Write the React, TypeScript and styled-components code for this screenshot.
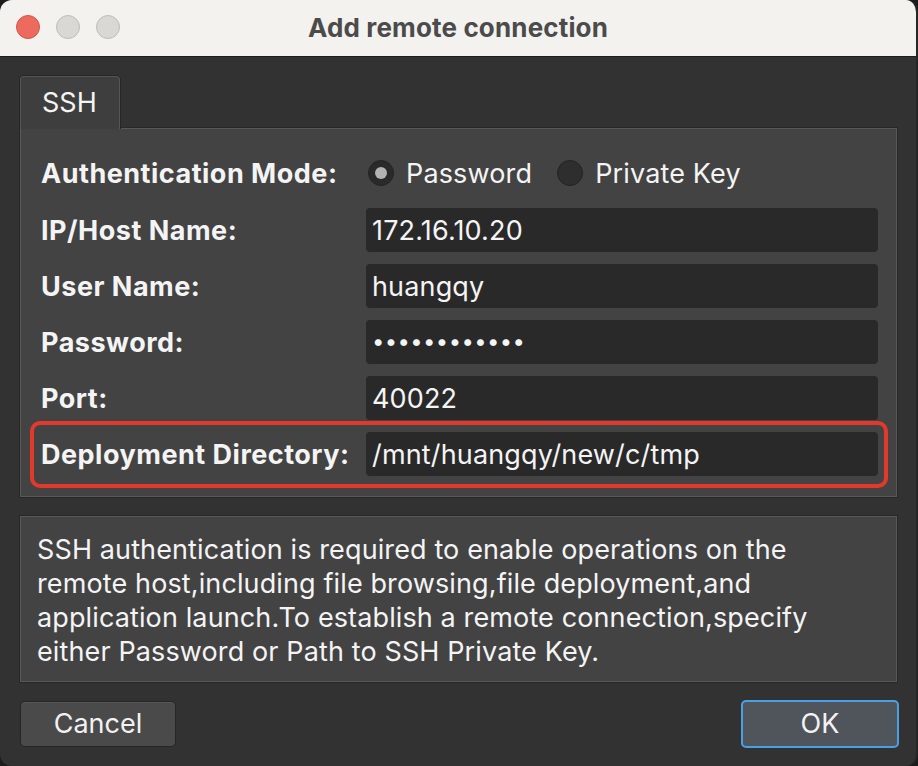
import React from "react";
import styled, { createGlobalStyle } from "styled-components";

const Global = createGlobalStyle`
  html, body { margin: 0; padding: 0; background: #1c1c1c; }
  body { font-family: Inter, "Liberation Sans", sans-serif; -webkit-font-smoothing: antialiased; }
  * { box-sizing: border-box; }
`;

const Window = styled.div`
  width: 918px;
  height: 766px;
  border-radius: 12px;
  overflow: hidden;
  display: flex;
  flex-direction: column;
  background: #323232;
  border-right: 2px solid #262626;
`;

const TitleBar = styled.div`
  height: 57px;
  flex: none;
  background: #f3f2ef;
  border-bottom: 1px solid #1e1e1e;
  display: flex;
  align-items: center;
  position: relative;
  padding-left: 16px;
  gap: 16px;
`;

const Light = styled.span<{ $color: string; $border: string }>`
  width: 24px;
  height: 24px;
  border-radius: 50%;
  background: ${(p) => p.$color};
  border: 1px solid ${(p) => p.$border};
  margin-top: -2px;
`;

const Title = styled.div`
  position: absolute;
  left: 0;
  right: 0;
  top: 0;
  bottom: 0;
  display: flex;
  align-items: center;
  justify-content: center;
  font-weight: 700;
  font-size: 26px;
  letter-spacing: 0.15px;
  color: #4b4b4b;
  padding-bottom: 2px;
  pointer-events: none;
`;

const Body = styled.div`
  flex: 1;
  display: flex;
  flex-direction: column;
  padding: 19px 19px 0 20px;
`;

const TabBar = styled.div`
  display: flex;
  height: 52px;
`;

const Tab = styled.div`
  width: 100px;
  height: 53px;
  background: #3e3e3e;
  border: 1px solid #555;
  border-bottom: none;
  border-radius: 4px 4px 0 0;
  color: #f4f4f4;
  font-size: 27px;
  display: flex;
  align-items: center;
  padding-left: 21px;
  padding-bottom: 2px;
  position: relative;
  z-index: 1;
  box-shadow: 0 -1px 0 #262626, -1px 0 0 #262626, 1px 0 0 #262626;
`;

const Pane = styled.div`
  height: 369px;
  background: #434343;
  border: 1px solid #585858;
  box-shadow: 0 0 0 1px #282828;
  display: flex;
  flex-direction: column;
  gap: 12px;
  padding: 21px 18px 0 20px;
`;

const Row = styled.div<{ $highlight?: boolean; $tall?: boolean }>`
  display: grid;
  grid-template-columns: 325px 1fr;
  align-items: center;
  height: ${(p) => (p.$tall ? 46 : 44)}px;
  position: relative;
  ${(p) =>
    p.$highlight &&
    `
    &::after {
      content: "";
      position: absolute;
      inset: -11px -10px -12px -11px;
      border: 4px solid #e2392d;
      border-radius: 10px;
      pointer-events: none;
    }
  `}
`;

const Label = styled.div`
  font-weight: 700;
  font-size: 27px;
  letter-spacing: 0.5px;
  color: #f4f4f4;
  white-space: nowrap;
  padding-top: 1px;
`;

const Field = styled.div`
  height: 44px;
  background: #292929;
  border-radius: 4px;
  color: #f4f4f4;
  font-size: 27px;
  letter-spacing: 0.15px;
  display: flex;
  align-items: center;
  padding-left: 6px;
  white-space: nowrap;
`;

const Dots = styled.span`
  letter-spacing: 0.4px;
  font-size: 22px;
  padding-bottom: 3px;
`;

const Radios = styled.div`
  display: flex;
  align-items: center;
  padding-left: 2px;
`;

const RadioItem = styled.div<{ $gap: number }>`
  display: flex;
  align-items: center;
  gap: 12px;
  margin-right: ${(p) => p.$gap}px;
  color: #f4f4f4;
  font-size: 27px;
  letter-spacing: 0.15px;
`;

const RadioCircle = styled.span<{ $checked?: boolean }>`
  width: 26px;
  height: 26px;
  border-radius: 50%;
  background: ${(p) => (p.$checked ? "#2a2a2a" : "#2e2e2e")};
  border: 1px solid #232323;
  display: flex;
  align-items: center;
  justify-content: center;
  &::after {
    content: "";
    display: ${(p) => (p.$checked ? "block" : "none")};
    width: 12px;
    height: 12px;
    border-radius: 50%;
    background: #b3b3b3;
  }
`;

const Description = styled.div`
  margin-top: 19px;
  height: 166px;
  background: #434343;
  border: 1px solid #585858;
  box-shadow: 0 0 0 1px #282828;
  padding: 16px 0 0 16px;
  color: #f4f4f4;
  font-size: 27px;
  letter-spacing: 0.12px;
  line-height: 34px;
  white-space: nowrap;
`;

const Buttons = styled.div`
  margin-top: 18px;
  display: flex;
  justify-content: space-between;
  align-items: center;
`;

const Button = styled.button<{ $primary?: boolean }>`
  font-family: inherit;
  font-size: 27px;
  color: #f2f2f2;
  height: ${(p) => (p.$primary ? 48 : 46)}px;
  width: ${(p) => (p.$primary ? 158 : 156)}px;
  border-radius: 5px;
  background: ${(p) => (p.$primary ? "#4f555b" : "#4a4a4a")};
  border: ${(p) => (p.$primary ? "2px solid #4aa0e6" : "1px solid #262626")};
  box-shadow: ${(p) => (p.$primary ? "none" : "inset 0 1px 0 #575757")};
  padding: 0 0 2px;
  margin-right: ${(p) => (p.$primary ? "-2px" : "0")};
`;

export default function App() {
  return (
    <>
      <Global />
      <Window>
        <TitleBar>
          <Light $color="#ec6a5e" $border="#d65448" />
          <Light $color="#d9d8d5" $border="#bfbebb" />
          <Light $color="#d9d8d5" $border="#bfbebb" />
          <Title>Add remote connection</Title>
        </TitleBar>
        <Body>
          <TabBar>
            <Tab>SSH</Tab>
          </TabBar>
          <Pane>
            <Row $tall>
              <Label>Authentication Mode:</Label>
              <Radios>
                <RadioItem $gap={25}>
                  <RadioCircle $checked />
                  Password
                </RadioItem>
                <RadioItem $gap={0}>
                  <RadioCircle />
                  Private Key
                </RadioItem>
              </Radios>
            </Row>
            <Row>
              <Label>IP/Host Name:</Label>
              <Field>172.16.10.20</Field>
            </Row>
            <Row>
              <Label>User Name:</Label>
              <Field>huangqy</Field>
            </Row>
            <Row>
              <Label>Password:</Label>
              <Field>
                <Dots>••••••••••••</Dots>
              </Field>
            </Row>
            <Row>
              <Label>Port:</Label>
              <Field>40022</Field>
            </Row>
            <Row $highlight>
              <Label>Deployment Directory:</Label>
              <Field>/mnt/huangqy/new/c/tmp</Field>
            </Row>
          </Pane>
          <Description>
            SSH authentication is required to enable operations on the
            <br />
            remote host,including file browsing,file deployment,and
            <br />
            application launch.To establish a remote connection,specify
            <br />
            either Password or Path to SSH Private Key.
          </Description>
          <Buttons>
            <Button>Cancel</Button>
            <Button $primary>OK</Button>
          </Buttons>
        </Body>
      </Window>
    </>
  );
}
